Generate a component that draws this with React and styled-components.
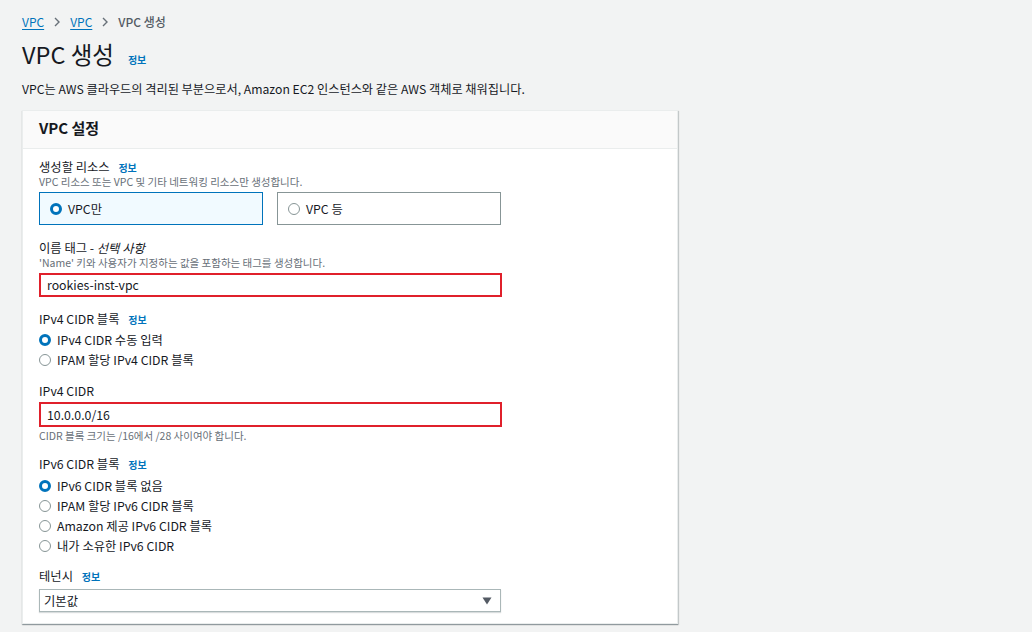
import React from "react"
import styled, { createGlobalStyle } from "styled-components"

const GlobalStyle = createGlobalStyle`
  html, body {
    margin: 0;
    padding: 0;
    background: #ffffff;
  }
  body {
    font-family: "Noto Sans CJK KR", "Noto Sans", sans-serif;
    color: #16191f;
  }
`;

function Chevron() {
  return (
    <svg width="8" height="10" viewBox="0 0 8 10">
      <path d="M2 1 L6 5 L2 9" fill="none" stroke="#687078" strokeWidth="1.4" />
    </svg>
  );
}

function Caret() {
  return (
    <svg width="10" height="8" viewBox="0 0 10 8">
      <path d="M0.5 0.5 H9.5 L5 7.5 Z" fill="#545b64" />
    </svg>
  );
}

function RadioRow({ checked, children }) {
  return (
    <Row>
      <Radio $checked={checked} />
      <span>{children}</span>
    </Row>
  );
}

function App() {
  return (
    <Page>
      <GlobalStyle />

      <Breadcrumbs>
        <Crumb>VPC</Crumb>
        <Sep><Chevron /></Sep>
        <Crumb>VPC</Crumb>
        <Sep><Chevron /></Sep>
        <Current>VPC 생성</Current>
      </Breadcrumbs>

      <TitleRow>
        <Title>VPC 생성</Title>
        <Info>정보</Info>
      </TitleRow>

      <Lead>VPC는 AWS 클라우드의 격리된 부분으로서, Amazon EC2 인스턴스와 같은 AWS 객체로 채워집니다.</Lead>

      <Panel>
        <PanelHeader>VPC 설정</PanelHeader>
        <PanelBody>
          <Field>
            <Label>생성할 리소스 <Info>정보</Info></Label>
            <Hint>VPC 리소스 또는 VPC 및 기타 네트워킹 리소스만 생성합니다.</Hint>
            <Tiles>
              <Tile $selected>
                <Radio $checked />
                <span>VPC만</span>
              </Tile>
              <Tile>
                <Radio />
                <span>VPC 등</span>
              </Tile>
            </Tiles>
          </Field>

          <Field $top={15}>
            <Label>이름 태그 - <em>선택 사항</em></Label>
            <Hint>'Name' 키와 사용자가 지정하는 값을 포함하는 태그를 생성합니다.</Hint>
            <TextInput defaultValue="rookies-inst-vpc" readOnly />
          </Field>

          <Field $top={14}>
            <Label>IPv4 CIDR 블록 <Info>정보</Info></Label>
            <Options>
              <RadioRow checked>IPv4 CIDR 수동 입력</RadioRow>
              <RadioRow>IPAM 할당 IPv4 CIDR 블록</RadioRow>
            </Options>
          </Field>

          <Field $top={13}>
            <Label>IPv4 CIDR</Label>
            <TextInput defaultValue="10.0.0.0/16" readOnly $height={25} />
            <Hint $top={2}>CIDR 블록 크기는 /16에서 /28 사이여야 합니다.</Hint>
          </Field>

          <Field $top={13}>
            <Label>IPv6 CIDR 블록 <Info>정보</Info></Label>
            <Options $top={4}>
              <RadioRow checked>IPv6 CIDR 블록 없음</RadioRow>
              <RadioRow>IPAM 할당 IPv6 CIDR 블록</RadioRow>
              <RadioRow>Amazon 제공 IPv6 CIDR 블록</RadioRow>
              <RadioRow>내가 소유한 IPv6 CIDR</RadioRow>
            </Options>
          </Field>

          <Field $top={12}>
            <Label>테넌시 <Info>정보</Info></Label>
            <Select>
              <span>기본값</span>
              <Caret />
            </Select>
          </Field>
        </PanelBody>
      </Panel>
    </Page>
  );
}

export default App;

const Page = styled.div`
  width: 1032px;
  height: 632px;
  box-sizing: border-box;
  padding: 14px 0 0 22px;
  background: #f2f3f3;
  overflow: hidden;
`;

const Breadcrumbs = styled.nav`
  display: flex;
  align-items: center;
  height: 16px;
  font-size: 12px;
  line-height: 16px;
`;

const Crumb = styled.a`
  color: #0073bb;
  text-decoration: underline;
  text-underline-offset: 2px;
`;

const Sep = styled.span`
  display: flex;
  align-items: center;
  margin: 0 9px;
`;

const Current = styled.span`
  color: #545b64;
  font-weight: 500;
`;

const TitleRow = styled.div`
  display: flex;
  align-items: baseline;
  height: 30px;
  gap: 8px;
  margin-top: 9px;
`;

const Title = styled.h1`
  margin: 0;
  font-size: 23.5px;
  font-weight: 400;
  line-height: 30px;
  color: #16191f;
`;

const Info = styled.a`
  color: #0073bb;
  font-size: 10px;
  line-height: 14px;
  font-weight: 700;
  font-style: normal;
  margin-left: 6px;
`;

const Lead = styled.p`
  margin: 12px 0 0;
  height: 16px;
  font-size: 12.2px;
  line-height: 16px;
  white-space: nowrap;
`;

const Panel = styled.section`
  width: 656px;
  margin-top: 13px;
  box-sizing: border-box;
  background: #ffffff;
  border: 1px solid #eaeded;
  box-shadow: 0 1px 1px 0 rgba(0, 28, 36, 0.3), 1px 1px 1px 0 rgba(0, 28, 36, 0.15);
`;

const PanelHeader = styled.header`
  height: 38px;
  box-sizing: border-box;
  padding: 7px 16px 0;
  background: #fafafa;
  border-bottom: 1px solid #eaeded;
  font-size: 15px;
  font-weight: 700;
  line-height: 20px;
`;

const PanelBody = styled.div`
  display: flex;
  flex-direction: column;
  padding: 10px 16px 11px;
`;

const Field = styled.div`
  display: flex;
  flex-direction: column;
  margin-top: ${(p) => p.$top || 0}px;
`;

const Label = styled.div`
  display: flex;
  align-items: baseline;
  height: 16px;
  font-size: 12.3px;
  line-height: 16px;
  white-space: pre;

  em {
    font-style: italic;
  }
`;

const Hint = styled.div`
  margin-top: ${(p) => p.$top || 0}px;
  height: 14px;
  font-size: 10.5px;
  line-height: 14px;
  color: #687078;
`;

const Tiles = styled.div`
  display: grid;
  grid-template-columns: 224px 224px;
  gap: 14px;
  margin-top: 3px;
`;

const Tile = styled.div`
  display: flex;
  align-items: center;
  gap: 6px;
  height: 33px;
  box-sizing: border-box;
  padding-left: 10px;
  border: 1px solid ${(p) => (p.$selected ? "#0073bb" : "#879596")};
  background: ${(p) => (p.$selected ? "#f1faff" : "#ffffff")};
  font-size: 12.3px;
`;

const Radio = styled.span`
  width: 12px;
  height: 12px;
  box-sizing: border-box;
  border-radius: 50%;
  flex-shrink: 0;
  background: #ffffff;
  border: ${(p) => (p.$checked ? "3.5px solid #0073bb" : "1px solid #879596")};
`;

const Options = styled.div`
  display: flex;
  flex-direction: column;
  margin-top: ${(p) => p.$top || 3}px;
`;

const Row = styled.div`
  display: flex;
  align-items: center;
  gap: 6px;
  height: 20px;
  font-size: 12.3px;
  line-height: 16px;
`;

const TextInput = styled.input`
  width: 463px;
  height: ${(p) => p.$height || 24}px;
  margin-top: 3px;
  box-sizing: border-box;
  padding: 0 6px;
  border: 2px solid #e0202b;
  outline: none;
  font-family: inherit;
  font-size: 12.3px;
  color: #16191f;
  background: #ffffff;
`;

const Select = styled.div`
  display: flex;
  align-items: center;
  justify-content: space-between;
  width: 462px;
  height: 23px;
  margin-top: 5px;
  box-sizing: border-box;
  padding: 0 8px 0 4px;
  border: 1px solid #aab7b8;
  box-shadow: 0 1px 1px rgba(0, 28, 36, 0.15);
  font-size: 12.3px;
`;
